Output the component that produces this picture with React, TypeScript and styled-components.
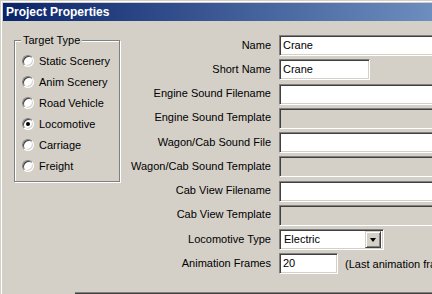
import React from 'react'
import styled, { createGlobalStyle } from 'styled-components'

const GlobalStyle = createGlobalStyle`
  html, body {
    margin: 0;
    padding: 0;
    background: #d4d0c8;
  }
  body {
    font-family: 'Liberation Sans', Arial, sans-serif;
    font-size: 11px;
    color: #000;
  }
`

const Window = styled.div`
  width: 432px;
  height: 294px;
  box-sizing: border-box;
  padding: 3px 0 0 3px;
  background: #d4d0c8;
  box-shadow: inset 1px 1px 0 #d4d0c8, inset 2px 2px 0 #fff;
  display: flex;
  flex-direction: column;
  overflow: hidden;
`

const TitleBar = styled.div`
  height: 18px;
  flex: none;
  display: flex;
  align-items: center;
  padding-left: 3px;
  background: linear-gradient(90deg, #0a246a 0px, #a6caf0 675px);
  color: #fff;
  font-weight: bold;
  font-size: 12px;
  white-space: nowrap;
`

const Body = styled.div`
  flex: 1;
  display: flex;
  align-items: flex-start;
  min-height: 0;
`

const GroupBox = styled.div`
  position: relative;
  flex: none;
  margin: 19px 0 0 11px;
  width: 106px;
  height: 142px;
  box-sizing: border-box;
  border: 1px solid #808080;
  border-right-color: #808080;
  box-shadow: inset 1px 1px 0 #fff, 1px 1px 0 #fff;
  padding: 14px 0 0 7px;
  display: flex;
  flex-direction: column;
  gap: 9px;
`

const GroupLabel = styled.span`
  position: absolute;
  top: -7px;
  left: 6px;
  padding: 0 2px;
  background: #d4d0c8;
  line-height: 13px;
`

const RadioRow = styled.label`
  display: flex;
  align-items: center;
  height: 12px;
  gap: 5px;
  white-space: nowrap;
`

const RadioDot = styled.span<{ $checked?: boolean }>`
  position: relative;
  width: 12px;
  height: 12px;
  box-sizing: border-box;
  flex: none;
  border-radius: 50%;
  border: 1px solid;
  border-color: #808080 #fff #fff #808080;
  box-shadow: inset 1px 1px 0 #404040, inset -1px -1px 0 #d4d0c8;
  background: #fff;
  &::after {
    content: '';
    display: ${({ $checked }) => ($checked ? 'block' : 'none')};
    position: absolute;
    left: 3px;
    top: 3px;
    width: 4px;
    height: 4px;
    border-radius: 50%;
    background: #000;
  }
`

const Fields = styled.div`
  flex: none;
  display: grid;
  grid-template-columns: 151px 300px;
  grid-auto-rows: 21px;
  column-gap: 8px;
  row-gap: 3.25px;
  padding-top: 14px;
  margin-left: 0;
`

const FieldLabel = styled.div`
  justify-self: end;
  align-self: center;
  white-space: nowrap;
  margin-top: -2px;
`

const FieldCell = styled.div`
  display: flex;
  align-items: center;
  gap: 7px;
  white-space: nowrap;
`

const TextBox = styled.div<{ $width?: number; $disabled?: boolean }>`
  width: ${({ $width }) => ($width ? `${$width}px` : '100%')};
  height: 21px;
  flex: none;
  box-sizing: border-box;
  border: 1px solid;
  border-color: #808080 #fff #fff #808080;
  box-shadow: inset 1px 1px 0 #404040, inset -1px -1px 0 #d4d0c8;
  background: ${({ $disabled }) => ($disabled ? '#d4d0c8' : '#fff')};
  padding: 2px 3px 0 3px;
  line-height: 15px;
  overflow: hidden;
`

const Combo = styled(TextBox)`
  display: flex;
  align-items: center;
  justify-content: space-between;
  padding: 2px 2px 2px 4px;
`

const ComboButton = styled.span`
  width: 16px;
  height: 17px;
  flex: none;
  box-sizing: border-box;
  background: #d4d0c8;
  border: 1px solid;
  border-color: #d4d0c8 #404040 #404040 #d4d0c8;
  box-shadow: inset 1px 1px 0 #fff, inset -1px -1px 0 #808080;
  display: flex;
  align-items: center;
  justify-content: center;
`

const Arrow = styled.span`
  width: 0;
  height: 0;
  border-left: 3.5px solid transparent;
  border-right: 3.5px solid transparent;
  border-top: 4px solid #000;
`

const Hint = styled.span`
  white-space: nowrap;
`

const Footer = styled.div`
  flex: none;
  height: 2px;
  margin-left: 72px;
  box-sizing: border-box;
  border-top: 1px solid #808080;
  background: #404040;
`

const targetTypes = [
  'Static Scenery',
  'Anim Scenery',
  'Road Vehicle',
  'Locomotive',
  'Carriage',
  'Freight',
]

type Field = {
  label: string
  value?: string
  width?: number
  disabled?: boolean
}

const fields: Field[] = [
  { label: 'Name', value: 'Crane' },
  { label: 'Short Name', value: 'Crane', width: 91 },
  { label: 'Engine Sound Filename' },
  { label: 'Engine Sound Template', disabled: true },
  { label: 'Wagon/Cab Sound File' },
  { label: 'Wagon/Cab Sound Template', disabled: true },
  { label: 'Cab View Filename' },
  { label: 'Cab View Template', disabled: true },
]

export default function App() {
  return (
    <>
      <GlobalStyle />
      <Window>
        <TitleBar>Project Properties</TitleBar>
        <Body>
          <GroupBox>
            <GroupLabel>Target Type</GroupLabel>
            {targetTypes.map((t) => (
              <RadioRow key={t}>
                <RadioDot $checked={t === 'Locomotive'} />
                {t}
              </RadioRow>
            ))}
          </GroupBox>
          <Fields>
            {fields.map((f) => (
              <React.Fragment key={f.label}>
                <FieldLabel>{f.label}</FieldLabel>
                <FieldCell>
                  <TextBox $width={f.width} $disabled={f.disabled}>
                    {f.value}
                  </TextBox>
                </FieldCell>
              </React.Fragment>
            ))}
            <FieldLabel>Locomotive Type</FieldLabel>
            <FieldCell>
              <Combo $width={105}>
                Electric
                <ComboButton>
                  <Arrow />
                </ComboButton>
              </Combo>
            </FieldCell>
            <FieldLabel>Animation Frames</FieldLabel>
            <FieldCell>
              <TextBox $width={59}>20</TextBox>
              <Hint>(Last animation frame number)</Hint>
            </FieldCell>
          </Fields>
        </Body>
        <Footer />
      </Window>
    </>
  )
}
